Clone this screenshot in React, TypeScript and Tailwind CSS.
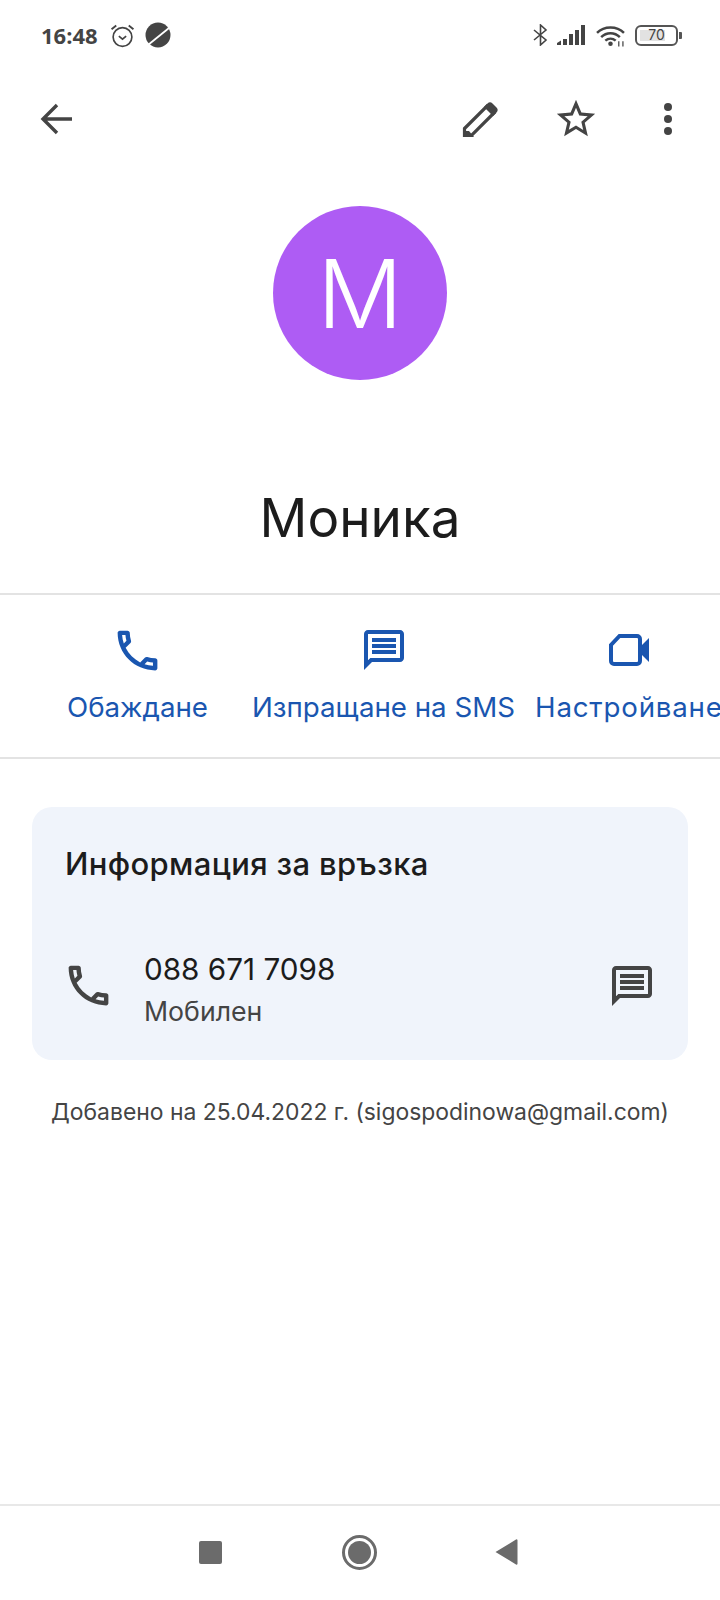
import React from 'react'

const CALL =
  'M6.54 5c.06.89.21 1.76.45 2.59l-1.2 1.2c-.41-1.2-.67-2.47-.76-3.79h1.51m9.86 12.02c.85.24 1.72.39 2.6.45v1.49c-1.32-.09-2.59-.35-3.8-.75l1.2-1.19M7.5 3H4c-.55 0-1 .45-1 1 0 9.39 7.61 17 17 17 .55 0 1-.45 1-1v-3.49c0-.55-.45-1-1-1-1.24 0-2.45-.2-3.57-.57-.1-.04-.21-.05-.31-.05-.26 0-.51.1-.71.29l-2.2 2.2c-2.83-1.45-5.15-3.76-6.59-6.59l2.2-2.2c.28-.28.36-.67.25-1.02C8.7 6.45 8.5 5.25 8.5 4c0-.55-.45-1-1-1z'
const MESSAGE =
  'M20 2H4c-1.1 0-2 .9-2 2v18l4-4h14c1.1 0 2-.9 2-2V4c0-1.1-.9-2-2-2zm0 14H5.17L4 17.17V4h16v12zM6 12h12v2H6zm0-3h12v2H6zm0-3h12v2H6z'
const STAR =
  'M22 9.24l-7.19-.62L12 2 9.19 8.63 2 9.24l5.46 4.73L5.82 21 12 17.27 18.18 21l-1.63-7.03L22 9.24zM12 15.4l-3.76 2.27 1-4.28-3.32-2.88 4.38-.38L12 6.1l1.71 4.04 4.38.38-3.32 2.88 1 4.28L12 15.4z'

function Material({ d, className }: { d: string; className: string }) {
  return (
    <svg viewBox="0 0 24 24" className={`shrink-0 ${className}`} fill="currentColor">
      <path d={d} />
    </svg>
  )
}

function StatusBar() {
  return (
    <div className="h-[70px] flex items-center justify-between pl-[41px] pr-[38px] text-[#444444]">
      <div className="flex items-center">
        <span className="font-['Open_Sans',sans-serif] font-bold text-[22px] leading-none">16:48</span>
        {/* alarm */}
        <svg viewBox="0 0 24 24" className="w-[25px] h-[25px] ml-[12px]" fill="none" stroke="currentColor">
          <circle cx="12" cy="13.5" r="9" strokeWidth="1.6" />
          <path d="M8.5 12.5l3.5 3 3.5-3" strokeWidth="1.6" />
          <path d="M1.5 6L6 2.5M22.5 6L18 2.5" strokeWidth="1.8" />
        </svg>
        {/* planet */}
        <svg viewBox="0 0 26 26" className="w-[26px] h-[26px] ml-[10px]" fill="currentColor">
          <circle cx="13" cy="13" r="12.5" />
          <path d="M3 23L24 6" stroke="#ffffff" strokeWidth="1.8" />
        </svg>
      </div>
      <div className="flex items-center">
        {/* bluetooth */}
        <svg viewBox="0 0 15 22" className="w-[15px] h-[22px]" fill="none" stroke="currentColor" strokeWidth="1.6">
          <path d="M1 6l12 10-5.5 5V1L13 6 1 16" />
        </svg>
        {/* signal */}
        <svg viewBox="0 0 28 20" className="w-[28px] h-[20px] ml-[9px]" fill="currentColor">
          <path d="M0 20v-2l4-2.5V20zM6 20v-6h4v6zM12 20V9h4v11zM18 20V5h4v15zM24 20V0h4v20z" />
        </svg>
        {/* wifi */}
        <svg viewBox="0 0 28 22" className="w-[29px] h-[23px] ml-[11px]" fill="none" stroke="currentColor">
          <path d="M1 8.5C8 1.5 20 1.5 27 8.5" strokeWidth="2.4" />
          <path d="M5 12.5C10 7.5 18 7.5 23 12.5" strokeWidth="2.4" />
          <path d="M9 16c3-2.6 7-2.6 10 0" strokeWidth="2.4" />
          <circle cx="14" cy="19" r="2.2" fill="currentColor" stroke="none" />
          <path d="M22 16.5v5M26 16.5v5" strokeWidth="1.2" />
        </svg>
        {/* battery */}
        <div className="flex items-center ml-[10px]">
          <div className="relative w-[43px] h-[21px] border-2 border-[#555555] rounded-[6px] flex items-center justify-center">
            <div className="absolute left-[3px] top-[3px] bottom-[3px] w-[25px] bg-[#e2e2e2]" />
            <span className="relative font-['Inter',sans-serif] text-[14px] leading-none">70</span>
          </div>
          <div className="w-[3px] h-[7px] ml-[1px] bg-[#555555] rounded-r-[1px]" />
        </div>
      </div>
    </div>
  )
}

function TopBar() {
  return (
    <div className="h-[98px] flex items-center pl-[40px] text-[#444444]">
      <svg viewBox="0 0 32 32" className="w-[32px] h-[32px]" fill="none" stroke="currentColor" strokeWidth="3.4">
        <path d="M32 16H3M17 2L3 16l14 14" />
      </svg>
      <svg viewBox="0 0 38 38" className="w-[38px] h-[38px] ml-[390px]" fill="none" stroke="currentColor">
        <path d="M2.5 35.5v-7L25 6l7 7L9.5 35.5z" strokeWidth="3.2" />
        <path d="M25.5 3.5c1.6-1.6 3.4-1.6 5 0l4 4c1.6 1.6 1.6 3.4 0 5L31 16l-9-9z" fill="currentColor" stroke="none" />
        <path d="M1 31h6l5 6H1z" fill="currentColor" stroke="none" />
      </svg>
      <Material d={STAR} className="w-[46px] h-[46px] ml-[53px]" />
      <div className="flex flex-col gap-[4px] ml-[65px]">
        <div className="w-[8px] h-[8px] rounded-full bg-[#444444]" />
        <div className="w-[8px] h-[8px] rounded-full bg-[#444444]" />
        <div className="w-[8px] h-[8px] rounded-full bg-[#444444]" />
      </div>
    </div>
  )
}

function ActionButton({ label, className, labelClass, children }: { label: string; className: string; labelClass?: string; children: React.ReactNode }) {
  return (
    <div className={`flex flex-col items-center shrink-0 ${className}`}>
      <div className="h-[48px] flex items-center justify-center">{children}</div>
      <span className={`mt-[16px] text-[27.7px] leading-[34px] whitespace-nowrap ${labelClass ?? ''}`}>{label}</span>
    </div>
  )
}

function Actions() {
  return (
    <div className="h-[166px] border-y-2 border-[#e3e3e3] flex overflow-hidden pt-[31px] text-[#1a56b0]">
      <ActionButton label="Обаждане" className="ml-[67px]">
        <Material d={CALL} className="w-[53px] h-[53px]" />
      </ActionButton>
      <ActionButton label="Изпращане на SMS" className="ml-[44px]">
        <Material d={MESSAGE} className="w-[48px] h-[48px]" />
      </ActionButton>
      <ActionButton label="Настройване" className="ml-[20px]" labelClass="tracking-[0.8px]">
        <svg viewBox="0 0 40 32" className="w-[40px] h-[32px]" fill="none" stroke="currentColor">
          <path d="M10.5 2H28a3 3 0 0 1 3 3v22a3 3 0 0 1-3 3H5a3 3 0 0 1-3-3V11z" strokeWidth="4" />
          <path d="M32 12l8-8v24l-8-8z" fill="currentColor" stroke="none" />
        </svg>
      </ActionButton>
    </div>
  )
}

function ContactCard() {
  return (
    <div className="mx-[32px] mt-[48px] h-[253px] rounded-[20px] bg-[#f0f4fb] pl-[33px] pr-[32px] pt-[37px]">
      <h2 className="text-[#1c1c1c] text-[31px] leading-[40px] font-medium tracking-[0.35px]">Информация за връзка</h2>
      <div className="flex items-center mt-[65px]">
        <Material d={CALL} className="w-[53px] h-[53px] -ml-[3px] mb-[6px] text-[#444444]" />
        <div className="ml-[29px] flex-1">
          <div className="text-[#1c1c1c] text-[29.7px] leading-[40px]">088 671 7098</div>
          <div className="text-[#444444] text-[26.7px] leading-[34px] mt-[5px]">Мобилен</div>
        </div>
        <Material d={MESSAGE} className="w-[48px] h-[48px] mb-[6px] text-[#444444]" />
      </div>
    </div>
  )
}

function NavBar() {
  return (
    <div className="h-[96px] border-t-2 border-[#e8e8e8] flex items-center text-[#6b6b6b] pb-[2px]">
      <div className="w-[23px] h-[23px] ml-[199px] rounded-[2px] bg-[#6b6b6b]" />
      <div className="w-[35px] h-[35px] ml-[120px] rounded-full border-[3px] border-[#6b6b6b] flex items-center justify-center">
        <div className="w-[23px] h-[23px] rounded-full bg-[#6b6b6b]" />
      </div>
      <svg viewBox="0 0 23 26" className="w-[23px] h-[26px] ml-[118px]" fill="currentColor">
        <path d="M0.5 13L21 0.5a1 1 0 0 1 1.5 1v23a1 1 0 0 1-1.5 1z" />
      </svg>
    </div>
  )
}

export default function App() {
  return (
    <div lang="bg" className="w-[720px] h-[1600px] bg-white flex flex-col font-['Inter',sans-serif] overflow-hidden">
      <StatusBar />
      <TopBar />
      <div className="flex justify-center mt-[38px]">
        <div className="w-[174px] h-[174px] rounded-full bg-[#ae5cf4] flex items-center justify-center text-white text-[95px] leading-none font-[350]">
          M
        </div>
      </div>
      <h1 className="text-center text-[#1c1c1c] text-[53px] leading-[70px] mt-[103px] mb-[40px]">Моника</h1>
      <Actions />
      <ContactCard />
      <p className="text-center text-[#444444] text-[22.9px] leading-[32px] mt-[36px]">
        Добавено на 25.04.2022 г. (sigospodinowa@gmail.com)
      </p>
      <div className="flex-1" />
      <NavBar />
    </div>
  )
}
